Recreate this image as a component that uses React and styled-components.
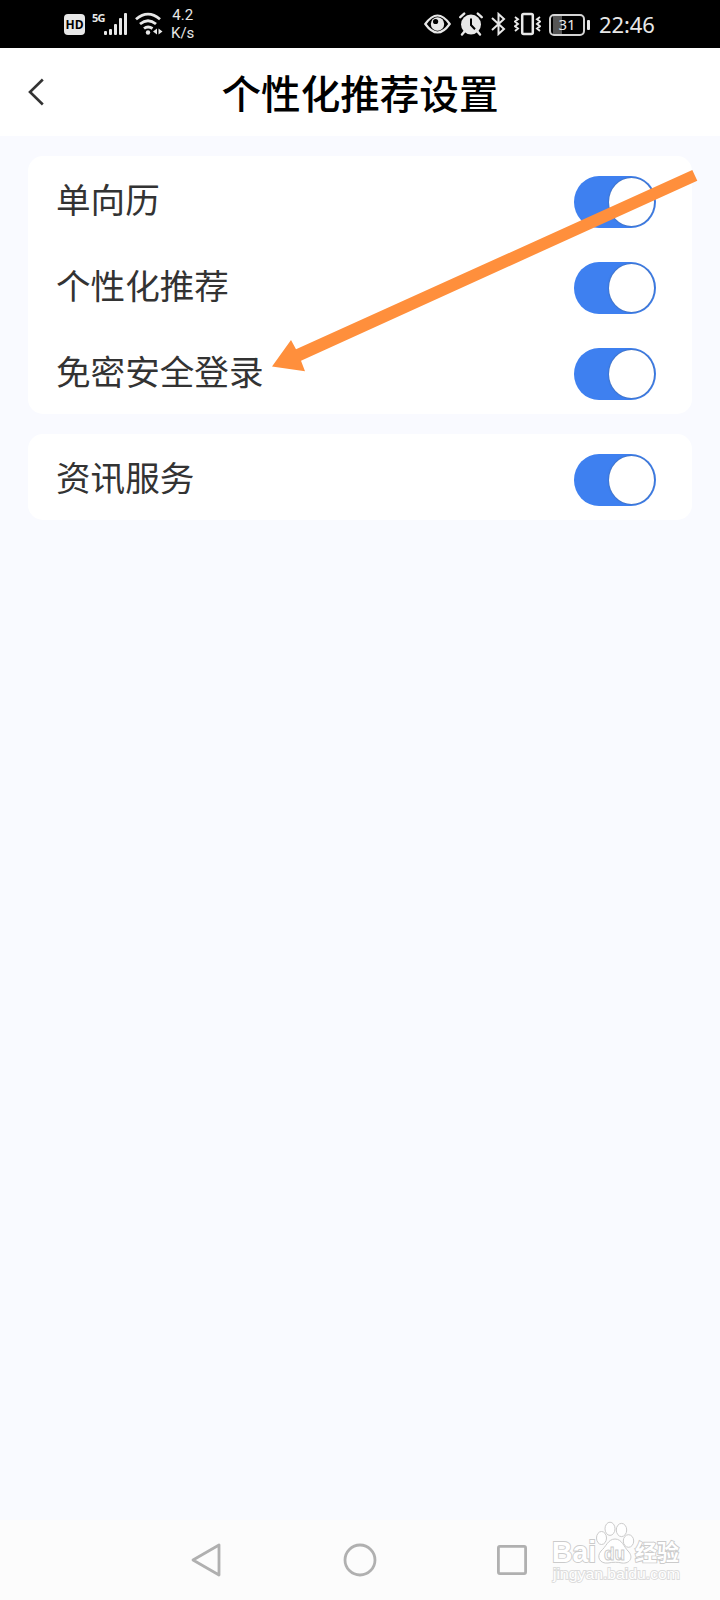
import React from 'react';
import styled, { createGlobalStyle } from 'styled-components';

const GlobalStyle = createGlobalStyle`
  * { box-sizing: border-box; }
  body {
    margin: 0;
    background: #f9faff;
    font-family: "Noto Sans", "Noto Sans CJK SC", sans-serif;
  }
`;

const Screen = styled.div`
  position: relative;
  display: flex;
  flex-direction: column;
  width: 720px;
  height: 1600px;
  background: #f9faff;
  overflow: hidden;
`;

const StatusBar = styled.header`
  display: flex;
  justify-content: space-between;
  height: 48px;
  padding: 0 64px 0 64px;
  background: #000;
  color: #e8e8e8;
`;

const StatusGroup = styled.div`
  display: flex;
  align-items: center;
  gap: ${(p) => p.$gap}px;
`;

const HdBadge = styled.span`
  width: 21px;
  height: 21px;
  margin-top: 1px;
  border-radius: 4px;
  background: #e8e8e8;
  color: #000;
  font: 700 12px/21px "Open Sans", sans-serif;
  text-align: center;
`;

const Signal = styled.div`
  display: flex;
  align-items: flex-start;
  height: 24px;
`;

const Generation = styled.span`
  width: 12px;
  font: 700 11px/11px "Noto Sans", sans-serif;
  letter-spacing: -0.8px;
`;

const Speed = styled.div`
  margin-left: 1px;
  font: 400 15px/18px Roboto, sans-serif;
  text-align: center;
`;

const Battery = styled.div`
  position: relative;
  width: 36px;
  height: 22px;
  margin: 1px 6px 0 0;
  border: 2px solid #d4d4d4;
  border-radius: 5px;
  background: linear-gradient(90deg, #000 2px, #555 2px, #555 11px, #000 11px);
  font: 400 15px/17px "Noto Sans", sans-serif;
  text-align: center;
  &::after {
    content: "";
    position: absolute;
    top: 4px;
    right: -7px;
    width: 3px;
    height: 10px;
    border-radius: 1px;
    background: #e8e8e8;
  }
`;

const Clock = styled.time`
  width: 57px;
  font: 400 22px/48px "Noto Sans", sans-serif;
  letter-spacing: -0.1px;
  white-space: nowrap;
`;

const TitleBar = styled.div`
  display: grid;
  grid-template-columns: 72px 1fr 72px;
  align-items: center;
  height: 88px;
  background: #fff;
`;

const BackButton = styled.button`
  display: flex;
  width: 44px;
  height: 44px;
  margin: 0 0 0 14px;
  padding: 8px 13px;
  border: 0;
  background: none;
`;

const Title = styled.h1`
  margin: 0;
  color: #000;
  font: 500 39.6px/56px "AR PL UKai CN", KaiTi, "Noto Sans CJK SC", sans-serif;
  text-align: center;
  white-space: nowrap;
`;

const Content = styled.main`
  display: flex;
  flex: 1;
  flex-direction: column;
  gap: 20px;
  padding: 20px 28px 0;
`;

const Card = styled.section`
  border-radius: 15px;
  background: #fff;
`;

const Row = styled.div`
  display: flex;
  align-items: center;
  justify-content: space-between;
  height: 86px;
  padding: 0 36.5px 0 28px;
`;

const Label = styled.span`
  margin-top: -3px;
  color: #333;
  font: 400 34.6px/50px "AR PL UKai CN", KaiTi, "Noto Sans CJK SC", sans-serif;
`;

const Toggle = styled.button`
  display: flex;
  justify-content: ${(p) => (p.$on ? 'flex-end' : 'flex-start')};
  width: 82px;
  height: 52px;
  margin: 6.5px 0 0;
  padding: 2px;
  border: 0;
  border-radius: 25px / 26px;
  background: ${(p) => (p.$on ? '#3e80f0' : '#ccc')};
`;

const Knob = styled.span`
  width: 45px;
  height: 48px;
  border-radius: 50%;
  background: #fff;
  box-shadow: 0 0 2px rgba(60, 80, 110, 0.8);
`;

const Pointer = styled.svg`
  position: absolute;
  top: 160px;
  left: 260px;
  pointer-events: none;
`;

const NavBar = styled.nav`
  display: flex;
  align-items: center;
  justify-content: center;
  gap: 118px;
  height: 80px;
  background: #fcfcfc;
`;

const Watermark = styled.svg`
  position: absolute;
  right: 30px;
  bottom: 10px;
`;

const groups = [
  ['单向历', '个性化推荐', '免密安全登录'],
  ['资讯服务'],
];

const SignalBars = () => (
  <svg width="24" height="24" viewBox="0 0 24 24" fill="#e8e8e8">
    <rect x="0" y="19" width="3" height="4" rx="1" />
    <rect x="5" y="17" width="3" height="6" rx="1" />
    <rect x="10" y="12" width="3" height="11" rx="1" />
    <rect x="15" y="6" width="3" height="17" rx="1" />
    <rect x="20" y="1" width="3" height="22" rx="1" />
  </svg>
);

const WifiIcon = () => (
  <svg width="28" height="24" viewBox="0 0 28 24" fill="none" stroke="#e8e8e8" strokeWidth="2.8">
    <path d="M1 7.2Q13 -3 25 7.2M5 12Q13 5.4 21 12M9 16.5Q13 13.4 17.5 16.5" />
    <circle cx="13" cy="20.5" r="2.2" fill="#e8e8e8" stroke="none" />
    <path d="M22 16.5v6l-4-3zM23.5 16.5v6l4-3z" fill="#e8e8e8" stroke="none" />
  </svg>
);

const EyeIcon = () => (
  <svg width="27" height="20" viewBox="0 0 27 20" fill="none" stroke="#e8e8e8" strokeWidth="2.2">
    <path d="M1.3 10Q13.5 -7 25.7 10Q13.5 27 1.3 10Z" />
    <circle cx="13.5" cy="10" r="6.7" fill="#e8e8e8" stroke="none" />
    <circle cx="11.6" cy="7.5" r="2.6" fill="#000" stroke="none" />
  </svg>
);

const AlarmIcon = () => (
  <svg width="24" height="24" viewBox="0 0 24 24">
    <circle cx="12" cy="12.5" r="10" fill="#e8e8e8" />
    <path d="M1.3 5.2L5.2 1.6M18.8 1.6L22.7 5.2M5.5 19.5L3 22.5M18.5 19.5L21 22.5" stroke="#e8e8e8" strokeWidth="2.4" strokeLinecap="round" />
    <path d="M12 6.5V13L16 17.2" fill="none" stroke="#000" strokeWidth="2" />
  </svg>
);

const BluetoothIcon = () => (
  <svg width="15" height="24" viewBox="0 0 15 24" fill="none" stroke="#e8e8e8" strokeWidth="2">
    <path d="M1 6L13 17L7.5 22V2L13 7L1 18" />
  </svg>
);

const VibrateIcon = () => (
  <svg width="27" height="24" viewBox="0 0 27 24" fill="none" stroke="#e8e8e8">
    <rect x="8.2" y="2" width="10.6" height="20" rx="1.5" strokeWidth="2.5" />
    <path d="M1 5l3 2.2l-3 2.3l3 2.5l-3 2.3l3 2.3l-3 2.4M26 5l-3 2.2l3 2.3l-3 2.5l3 2.3l-3 2.3l3 2.4" strokeWidth="1.9" />
  </svg>
);

export default function App() {
  return (
    <Screen>
      <GlobalStyle />
      <StatusBar>
        <StatusGroup $gap={7}>
          <HdBadge>HD</HdBadge>
          <Signal><Generation>5G</Generation><SignalBars /></Signal>
          <WifiIcon />
          <Speed>4.2<br />K/s</Speed>
        </StatusGroup>
        <StatusGroup $gap={8}>
          <EyeIcon /><AlarmIcon /><BluetoothIcon /><VibrateIcon />
          <Battery>31</Battery>
          <Clock>22:46</Clock>
        </StatusGroup>
      </StatusBar>
      <TitleBar>
        <BackButton aria-label="返回">
          <svg width="18" height="28" viewBox="0 0 18 28" fill="none" stroke="#333" strokeWidth="2.6">
            <path d="M15.8 1.5L3 14L15.8 26.5" />
          </svg>
        </BackButton>
        <Title>个性化推荐设置</Title>
      </TitleBar>
      <Content>
        {groups.map((labels) => (
          <Card key={labels[0]}>
            {labels.map((label) => (
              <Row key={label}>
                <Label>{label}</Label>
                <Toggle $on role="switch" aria-checked="true" aria-label={label}><Knob /></Toggle>
              </Row>
            ))}
          </Card>
        ))}
      </Content>
      <NavBar>
        <svg width="34" height="36" viewBox="0 0 34 36" fill="none" stroke="#b0b0b0" strokeWidth="2.8" strokeLinejoin="round">
          <path d="M28 3V33L2 18Z" />
        </svg>
        <svg width="34" height="34" viewBox="0 0 34 34" fill="none" stroke="#b0b0b0" strokeWidth="2.8">
          <circle cx="17" cy="17" r="15" />
        </svg>
        <svg width="34" height="34" viewBox="0 0 34 34" fill="none" stroke="#b0b0b0" strokeWidth="2.8">
          <rect x="3.4" y="3.4" width="27.2" height="27.2" rx="1.5" />
        </svg>
      </NavBar>
      <Pointer width="450" height="220" viewBox="260 160 450 220">
        <path d="M272 366.5L291 340L296 349.3L692.3 170L697.3 180.7L301 360.7L305 371.3Z" fill="#ff8f3c" />
      </Pointer>
      <Watermark width="140" height="70" viewBox="550 1520 140 70" fill="#fff" stroke="#cbcbcb" strokeWidth="1">
        <g fontFamily="Liberation Sans, Noto Sans CJK SC, sans-serif" fontWeight="700" paintOrder="stroke" strokeWidth="1.8">
          <text x="552" y="1562" fontSize="29" textLength="44" lengthAdjust="spacingAndGlyphs">Bai</text>
          <text x="635" y="1560" fontSize="22" textLength="44">经验</text>
          <text x="553" y="1579" fontSize="15" fontWeight="400" stroke="#dcdcdc" textLength="127" lengthAdjust="spacingAndGlyphs">jingyan.baidu.com</text>
        </g>
        <ellipse cx="601.5" cy="1538" rx="5" ry="6.5" />
        <ellipse cx="610" cy="1528.8" rx="5" ry="6.6" />
        <ellipse cx="621.5" cy="1530" rx="5.2" ry="6.6" />
        <ellipse cx="628.5" cy="1541" rx="5.2" ry="6.3" />
        <path d="M615 1539C608 1539 606 1547 601 1551C596 1557 600 1564 608 1563C613 1562 618 1562 622 1563C630 1564 634 1557 628 1551C624 1547 622 1539 615 1539Z" />
        <text x="604" y="1560" fontSize="19" fontWeight="700" fontFamily="Liberation Sans, sans-serif" textLength="21" lengthAdjust="spacingAndGlyphs">du</text>
      </Watermark>
    </Screen>
  );
}
